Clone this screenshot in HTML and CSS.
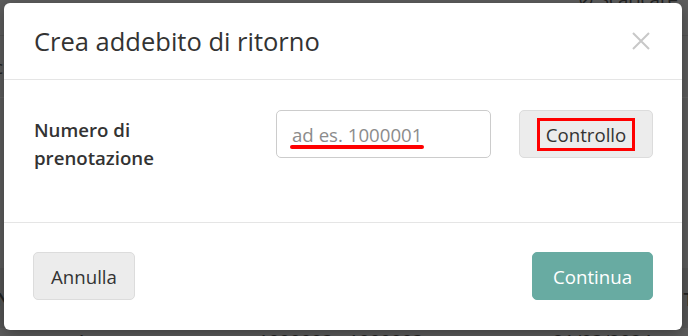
FILE: index.html
```html
<!DOCTYPE html>
<html lang="it">
<head>
    <meta charset="UTF-8">
    <meta name="viewport" content="width=device-width, initial-scale=1.0">
    <title>Crea addebito di ritorno</title>
    <link rel="stylesheet" href="styles.css">
</head>
<body>
    <div class="page">
        <div class="toolbar">
            <span class="toolbar-link">&#8856; Scaricare</span>
        </div>
        <div class="filters">
            <span class="filter-label">c</span>
        </div>
        <div class="spacer"></div>
        <div class="table-head">
            <span>N</span>
            <span></span>
            <span class="right">T</span>
        </div>
        <div class="table-row">
            <span class="col-num">1</span>
            <span class="col-range">1000003 - 1000003</span>
            <span class="col-date">21/03/2024</span>
        </div>
    </div>

    <div class="modal">
        <div class="modal-header">
            <h4 class="modal-title">Crea addebito di ritorno</h4>
            <button type="button" class="close" aria-label="Chiudi">
                <svg width="18" height="18" viewBox="0 0 18 18">
                    <path d="M1 1 L17 17 M17 1 L1 17" stroke="#c8c8c8" stroke-width="2" fill="none"/>
                </svg>
            </button>
        </div>
        <div class="modal-body">
            <label class="control-label" for="booking">Numero di prenotazione</label>
            <div class="input-wrap">
                <input type="text" id="booking" class="form-control" placeholder="ad es. 1000001">
                <span class="mark-underline"></span>
            </div>
            <button type="button" class="btn btn-default btn-check"><span class="mark-box">Controllo</span></button>
        </div>
        <div class="modal-footer">
            <button type="button" class="btn btn-default btn-cancel">Annulla</button>
            <button type="button" class="btn btn-primary btn-continue">Continua</button>
        </div>
    </div>
</body>
</html>
```

FILE: styles.css
```css
body {
    margin: 0;
    padding: 0;
    font-family: "Open Sans", Arial, sans-serif;
    background-color: #5e5e5e;
    color: #333;
    overflow: hidden;
}

/* page behind the modal, already dimmed */
.page {
    color: #232323;
    font-size: 18.67px;
}

.toolbar {
    height: 35px;
    border-bottom: 1px solid #555;
    display: flex;
    justify-content: flex-end;
    padding-right: 10px;
}

.toolbar-link {
    margin-top: -14px;
    line-height: 25px;
}

.filters {
    height: 61px;
    border-bottom: 1px solid #666;
    display: flex;
    align-items: center;
}

.filter-label {
    margin-left: -6px;
}

.spacer {
    height: 170px;
}

.table-head {
    height: 60px;
    display: flex;
    justify-content: space-between;
    align-items: center;
    font-weight: 600;
    background-color: #575757;
}

.table-head span:first-child {
    margin-left: -4px;
}

.table-head .right {
    margin-right: -6px;
}

.table-row {
    display: grid;
    grid-template-columns: 258px 295px 1fr;
    line-height: 25px;
}

.col-num {
    padding-left: 76px;
}

/* modal */
.modal {
    position: absolute;
    top: 3px;
    left: 4px;
    width: 678px;
    background-color: #fff;
    border-radius: 6px;
    box-shadow: 0 4px 16px rgba(0, 0, 0, 0.35);
}

.modal-header {
    display: flex;
    align-items: center;
    justify-content: space-between;
    padding: 21px 32px 21px 30px;
    border-bottom: 1px solid #e5e5e5;
}

.modal-title {
    margin: 0;
    font-size: 25.5px;
    font-weight: 400;
    line-height: 34px;
    color: #333;
}

.close {
    border: none;
    background: none;
    padding: 0;
    width: 18px;
    height: 18px;
    cursor: pointer;
    display: block;
}

.close svg {
    display: block;
}

.modal-body {
    display: flex;
    align-items: flex-start;
    padding: 30px 29px 50px 30px;
}

.control-label {
    flex: 0 0 auto;
    width: 150px;
    margin-right: 92px;
    padding-top: 6px;
    font-size: 18.67px;
    font-weight: 600;
    line-height: 28px;
    color: #333;
}

.input-wrap {
    position: relative;
    flex: 0 0 auto;
    width: 215px;
}

.form-control {
    box-sizing: border-box;
    width: 215px;
    height: 48px;
    padding: 0 15px;
    border: 1px solid #ccc;
    border-radius: 5px;
    font-family: "Open Sans", Arial, sans-serif;
    font-size: 18.67px;
    color: #333;
}

.form-control::placeholder {
    color: #8c8c8c;
}

.mark-underline {
    position: absolute;
    left: 14px;
    top: 35px;
    width: 134px;
    height: 4px;
    border-radius: 2px;
    background-color: #f00;
}

.btn {
    box-sizing: border-box;
    height: 48px;
    border-radius: 5px;
    font-family: "Open Sans", Arial, sans-serif;
    font-size: 18.67px;
    line-height: 25px;
    cursor: pointer;
}

.btn-default {
    background-color: #ececec;
    border: 1px solid #dcdcdc;
    color: #333;
}

.btn-primary {
    background-color: #68aba2;
    border: 1px solid #68aba2;
    color: #fff;
}

.btn-check {
    flex: 0 0 auto;
    width: 134px;
    margin-left: 28px;
    padding: 0;
}

.mark-box {
    display: inline-block;
    border: 3px solid #f00;
    padding: 1px 6px;
}

.modal-footer {
    display: flex;
    justify-content: space-between;
    padding: 29px 29px 30px 29px;
    border-top: 1px solid #e5e5e5;
}

.btn-cancel {
    width: 102px;
    padding: 0;
}

.btn-continue {
    width: 121px;
    padding: 0;
}
```
